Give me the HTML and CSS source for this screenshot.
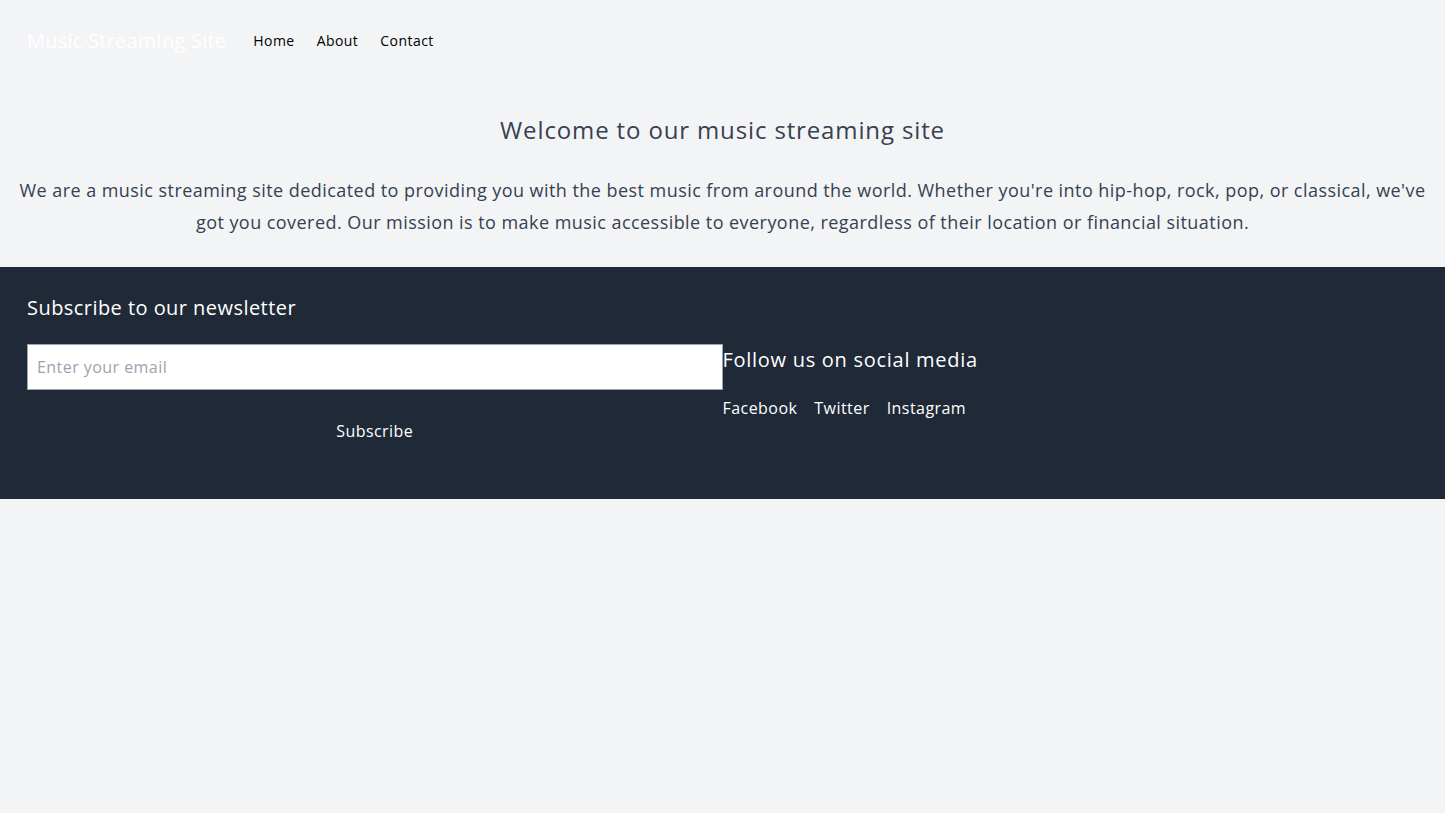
FILE: index.html
```html
<!DOCTYPE html>
<html lang="en">
<head>
    <meta charset="UTF-8">
    <meta name="viewport" content="width=device-width, initial-scale=1.0">
    <title>Music Streaming Site</title>
    <link rel="stylesheet" href="styles.css">
</head>
<body>

    <header class="site-header">
        <a class="logo" href="#">Music Streaming Site</a>
        <nav class="nav">
            <a href="#">Home</a>
            <a href="#">About</a>
            <a href="#">Contact</a>
        </nav>
    </header>

    <main class="intro">
        <h1>Welcome to our music streaming site</h1>
        <p>We are a music streaming site dedicated to providing you with the best music from around the world. Whether you're into hip-hop, rock, pop, or classical, we've got you covered. Our mission is to make music accessible to everyone, regardless of their location or financial situation.</p>
    </main>

    <footer class="site-footer">
        <h2>Subscribe to our newsletter</h2>
        <div class="footer-row">
            <form class="newsletter" onsubmit="return false;">
                <input type="email" class="email-box" placeholder="Enter your email">
                <button type="submit" class="subscribe-button">Subscribe</button>
            </form>
            <div class="social">
                <h2>Follow us on social media</h2>
                <div class="social-links">
                    <a href="#">Facebook</a>
                    <a href="#">Twitter</a>
                    <a href="#">Instagram</a>
                </div>
            </div>
        </div>
    </footer>

</body>
</html>
```

FILE: styles.css
```css
  body {
      font-family: "Open Sans", "Liberation Sans", sans-serif;
      letter-spacing: 0.028em;
      background-color: #f3f4f6;
      color: #374151;
      margin: 0;
  }
  a {
      text-decoration: none;
  }
  .site-header {
      display: flex;
      align-items: center;
      padding: 27px;
  }
  .logo {
      color: #fff;
      font-size: 20px;
      line-height: 28px;
      letter-spacing: 0.012em;
      margin-right: 27px;
  }
  .nav {
      display: flex;
      gap: 22px;
  }
  .nav a {
      color: #000;
      font-size: 14px;
      line-height: 20px;
  }
  .intro {
      text-align: center;
      padding: 32px 8px 29px;
  }
  .intro h1 {
      font-size: 24px;
      line-height: 32px;
      font-weight: normal;
      letter-spacing: 0.036em;
      margin: 0 0 28px;
  }
  .intro p {
      font-size: 18px;
      line-height: 32px;
      margin: 0;
  }
  .site-footer {
      background-color: #1f2937;
      color: #fff;
      padding: 27px 27px 45px;
  }
  .site-footer h2 {
      font-size: 20px;
      line-height: 28px;
      font-weight: normal;
      margin: 0 0 22px;
  }
  .footer-row {
      display: flex;
  }
  .newsletter {
      flex: 1;
      display: flex;
      flex-direction: column;
      align-items: center;
  }
  .email-box {
      box-sizing: border-box;
      width: 100%;
      height: 46px;
      padding: 10px 9px;
      border: 1px solid #9ca3af;
      font-family: inherit;
      letter-spacing: inherit;
      font-size: 16px;
      color: #374151;
  }
  .email-box::placeholder {
      color: #9ca3af;
  }
  .subscribe-button {
      background: none;
      border: none;
      color: #fff;
      font-family: inherit;
      letter-spacing: inherit;
      font-size: 16px;
      line-height: 24px;
      padding: 13px 16px 11px;
      margin-top: 16px;
      cursor: pointer;
  }
  .social {
      flex: 1;
      padding-top: 2px;
  }
  .social h2 {
      letter-spacing: 0.036em;
  }
  .social-links {
      display: flex;
      gap: 17px;
  }
  .social-links a {
      color: #fff;
      font-size: 16px;
      line-height: 24px;
  }
```
